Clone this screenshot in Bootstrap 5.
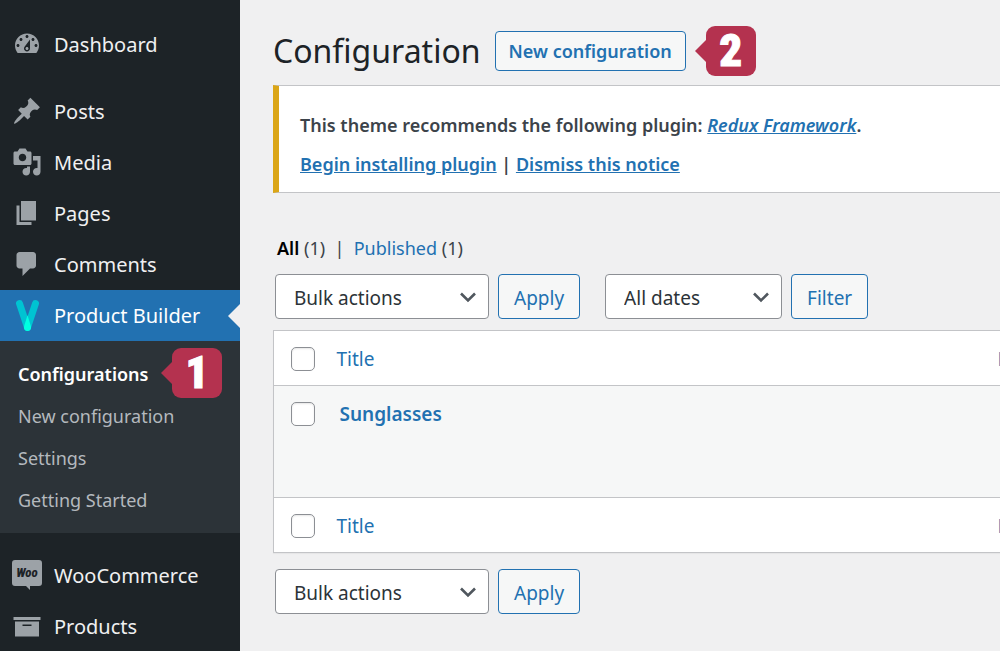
<!DOCTYPE html>
<html lang="en">
<head>
<meta charset="utf-8">
<meta name="viewport" content="width=device-width, initial-scale=1">
<title>Configuration</title>
<link rel="stylesheet" href="https://cdn.jsdelivr.net/npm/bootstrap@5.3.0/dist/css/bootstrap.min.css">
<style>
  :root { --wp-blue: #2271b1; --wp-line: #c3c4c7; --wp-dark: #1d2327; }
  body { font-family: "Noto Sans", "Open Sans", sans-serif; font-size: 19px; line-height: 26px; background: #f0f0f1; color: #3c434a; }
  a { color: var(--wp-blue); }

  .admin-menu { width: 240px; background: var(--wp-dark); padding-top: 19px; font-size: 20px; }
  .admin-menu .menu-item { height: 51px; padding-left: 12px; gap: 12px; color: #f0f0f1; }
  .admin-menu .menu-item svg { width: 30px; height: 30px; fill: #9ca2a7; margin-bottom: 2px; }
  .menu-gap { margin-top: 17px; }
  .menu-item.current { background: var(--wp-blue); color: #fff; }
  .menu-item.current::after { content: ""; position: absolute; right: 0; top: 14px; border: 12px solid transparent; border-left: 0; border-right-color: #f0f0f1; }
  .submenu { background: #2c3338; padding: 12px 0 12px 18px; font-size: 18px; }
  .submenu a { height: 42px; color: #b4b9be; }
  .submenu .active { color: #fff; font-weight: 600; }

  .step { width: 50px; height: 50px; border-radius: 9px; background: #b4324f; color: #fff; font: 900 45px/50px "Roboto Condensed", Roboto, "Liberation Sans", sans-serif; -webkit-text-stroke: 1px #fff; }
  .step::before { content: ""; position: absolute; left: -11px; top: 13px; border: 12px solid transparent; border-left: 0; border-right-color: #b4324f; }
  .step-menu { position: absolute; left: 172px; top: 7px; }

  .content { padding: 26px 0 0 33px; }
  .page-title { font-size: 32px; line-height: 40px; font-weight: 400; color: var(--wp-dark); }
  .btn-wp { --bs-btn-color: var(--wp-blue); --bs-btn-border-color: var(--wp-blue); --bs-btn-bg: #f6f7f7; --bs-btn-border-radius: 4px; --bs-btn-padding-y: 0; --bs-btn-padding-x: 15px; --bs-btn-font-size: 19px; --bs-btn-hover-color: #0a4b78; --bs-btn-hover-bg: #f0f0f1; --bs-btn-hover-border-color: #0a4b78; height: 45px; }
  .tools .btn-wp { padding-top: 3px; }
  .btn-title { --bs-btn-padding-x: 13px; --bs-btn-font-size: 18px; --bs-btn-font-weight: 600; height: 40px; margin-left: 14px; }
  .step-head { margin-left: 20px; }

  .notice { margin-top: 9px; border: 1px solid var(--wp-line); border-left: 6px solid #dba617; border-right: 0; background: #fff; padding: 26px 21px 14px; font-size: 18px; font-weight: 600; height: 108px; }
  .notice p { margin-bottom: 13px; }
  .views { margin-top: 42px; padding-left: 4px; font-size: 18px; }
  .views b { color: #000; font-weight: 600; }
  .tools { padding-left: 2px; gap: 9px; }
  .tools-top { margin-top: 13px; }
  .tools .form-select { height: 45px; padding: 3px 40px 0 18px; border: 1px solid #8c8f94; border-radius: 4px; font-size: 19px; color: #2c3338; background-color: #fff; background-position: right 10px center; background-size: 20px 20px;
    background-image: url("data:image/svg+xml,%3csvg xmlns='http://www.w3.org/2000/svg' viewBox='0 0 20 20'%3e%3cpath d='M3 6.5l7 7 7-7' fill='none' stroke='%2350575e' stroke-width='2.6'/%3e%3c/svg%3e"); }
  .bulk { width: 214px; }
  .dates { width: 177px; margin-left: 16px; }

  /* the list keeps a Date column that runs past the window edge */
  .posts { --bs-table-bg: #fff; width: calc(100% + 120px); table-layout: fixed; border: 1px solid var(--wp-line); margin: 11px 0 16px; box-shadow: 0 1px 1px rgba(0,0,0,.04); }
  .posts > * > tr > * { border-bottom: 1px solid var(--wp-line); height: 55px; padding: 15px 0 13px; font-weight: 400; vertical-align: top; box-shadow: none; }
  .posts tbody { border-top: 0; }
  .posts > tbody > tr > * { height: 112px; background: #f6f7f7; }
  .posts .check-col { width: 63px; padding-left: 17px; }
  .posts .date-col { width: 122px; }
  .posts .form-check-input { display: block; width: 24px; height: 24px; margin: 1px 0 0; border: 1px solid #8c8f94; border-radius: 5px; box-shadow: inset 0 1px 2px rgba(0,0,0,.1); }
  .posts .row-title { font-weight: 600; padding-left: 3px; }
</style>
</head>
<body>
<div class="d-flex vh-100 overflow-hidden">
  <nav class="admin-menu flex-shrink-0" aria-label="Main menu">
    <a href="#" class="menu-item d-flex align-items-center text-decoration-none">
      <svg viewBox="0 0 20 20" aria-hidden="true"><path d="M3.76 16h12.48c1.1-1.37 1.76-3.11 1.76-5 0-4.42-3.58-8-8-8s-8 3.58-8 8c0 1.89.66 3.63 1.76 5zM10 4c.55 0 1 .45 1 1s-.45 1-1 1-1-.45-1-1 .45-1 1-1zM6 6c.55 0 1 .45 1 1s-.45 1-1 1-1-.45-1-1 .45-1 1-1zm8 0c.55 0 1 .45 1 1s-.45 1-1 1-1-.45-1-1 .45-1 1-1zm-5.37 5.55L12 7v6c0 1.1-.9 2-2 2s-2-.9-2-2c0-.57.24-1.08.63-1.45zM4 10c.55 0 1 .45 1 1s-.45 1-1 1-1-.45-1-1 .45-1 1-1zm12 0c.55 0 1 .45 1 1s-.45 1-1 1-1-.45-1-1 .45-1 1-1zm-5 3c0-.55-.45-1-1-1s-1 .45-1 1 .45 1 1 1 1-.45 1-1z"/></svg>
      Dashboard</a>
    <a href="#" class="menu-item mt-3 d-flex align-items-center text-decoration-none">
      <svg viewBox="0 0 20 20" aria-hidden="true"><path d="M10.44 3.02l1.82-1.82 6.36 6.35-1.83 1.82c-1.05-.68-2.48-.57-3.41.36l-.75.75c-.92.93-1.04 2.35-.35 3.41l-1.83 1.82-2.41-2.41-2.8 2.79c-.42.42-3.38 2.71-3.8 2.29s1.86-3.39 2.28-3.81l2.79-2.79L4.1 9.36l1.83-1.82c1.05.69 2.48.57 3.4-.36l.75-.75c.93-.92 1.05-2.35.36-3.41z"/></svg>
      Posts</a>
    <a href="#" class="menu-item d-flex align-items-center text-decoration-none">
      <svg viewBox="0 0 20 20" aria-hidden="true"><path d="M13 11V4c0-.55-.45-1-1-1h-1.67L9 1H5L3.67 3H2c-.55 0-1 .45-1 1v7c0 .55.45 1 1 1h10c.55 0 1-.45 1-1zM7 4.5c1.38 0 2.5 1.12 2.5 2.5S8.38 9.5 7 9.5 4.5 8.38 4.5 7 5.62 4.5 7 4.5zM14 6h5v10.5c0 1.38-1.12 2.5-2.5 2.5S14 17.88 14 16.5s1.12-2.5 2.5-2.5c.17 0 .34.02.5.05V9h-3V6zm-4 8.05V13h2v3.5c0 1.38-1.12 2.5-2.5 2.5S7 17.88 7 16.5 8.12 14 9.5 14c.17 0 .34.02.5.05z"/></svg>
      Media</a>
    <a href="#" class="menu-item d-flex align-items-center text-decoration-none">
      <svg viewBox="0 0 20 20" aria-hidden="true"><path d="M6 15V2h10v13H6zm-1 1h8v2H3V5h2v11z"/></svg>
      Pages</a>
    <a href="#" class="menu-item d-flex align-items-center text-decoration-none">
      <svg viewBox="0 0 20 20" aria-hidden="true"><path d="M5 2h9c1.1 0 2 .9 2 2v7c0 1.1-.9 2-2 2h-2l-5 5v-5H5c-1.1 0-2-.9-2-2V4c0-1.1.9-2 2-2z"/></svg>
      Comments</a>
    <a href="#" class="menu-item current position-relative d-flex align-items-center text-decoration-none">
      <svg viewBox="0 0 30 30" aria-hidden="true" overflow="visible"><g fill="none" stroke-width="7" stroke-linecap="round"><path d="M7.5 3.5l8 24M23.5 3.5l-8 24" stroke="#00c3d2"/></g><path d="M15.5 15.3l3.4 10.9a3.6 3.6 0 1 1-6.8 0z" fill="#00ffe1"/></svg>
      Product Builder</a>
    <div class="submenu position-relative">
      <a href="#" class="active d-flex align-items-center text-decoration-none">Configurations</a>
      <a href="#" class="d-flex align-items-center text-decoration-none">New configuration</a>
      <a href="#" class="d-flex align-items-center text-decoration-none">Settings</a>
      <a href="#" class="d-flex align-items-center text-decoration-none">Getting Started</a>
      <span class="step step-menu text-center">1</span>
    </div>
    <a href="#" class="menu-item menu-gap d-flex align-items-center text-decoration-none">
      <svg viewBox="0 0 30 30" aria-hidden="true"><path d="M3 0h24a3 3 0 0 1 3 3v20a3 3 0 0 1-3 3h-9v4l-4-4H3a3 3 0 0 1-3-3V3a3 3 0 0 1 3-3z"/><text x="15" y="17" text-anchor="middle" font-family="Roboto Condensed, Liberation Sans, sans-serif" font-size="13" font-weight="800" font-style="italic" fill="#1d2327">Woo</text></svg>
      WooCommerce</a>
    <a href="#" class="menu-item d-flex align-items-center text-decoration-none">
      <svg viewBox="0 0 20 20" aria-hidden="true"><path d="M19 4v2H1V4h18zM2 7h16v10H2V7zm11 3V9H7v1h6z"/></svg>
      Products</a>
  </nav>

  <main class="content flex-grow-1 overflow-hidden">
    <header class="d-flex align-items-center">
      <h1 class="page-title mb-0">Configuration</h1>
      <button type="button" class="btn btn-wp btn-title">New configuration</button>
      <span class="step step-head position-relative text-center">2</span>
    </header>

    <div class="notice">
      <p>This theme recommends the following plugin: <a href="#"><em>Redux Framework</em></a>.</p>
      <p><a href="#">Begin installing plugin</a> | <a href="#">Dismiss this notice</a></p>
    </div>

    <div class="views"><b>All</b> (1) &nbsp;|&nbsp; <a href="#" class="text-decoration-none">Published</a> (1)</div>

    <div class="tools tools-top d-flex">
      <select class="form-select bulk" aria-label="Bulk actions"><option>Bulk actions</option></select>
      <button type="button" class="btn btn-wp">Apply</button>
      <select class="form-select dates" aria-label="Filter by date"><option>All dates</option></select>
      <button type="button" class="btn btn-wp">Filter</button>
    </div>

    <table class="table posts">
      <thead>
        <tr><th class="check-col"><input type="checkbox" class="form-check-input" aria-label="Select all"></th><th><a href="#" class="text-decoration-none">Title</a></th><th class="date-col"><a href="#" class="text-decoration-none">Date</a></th></tr>
      </thead>
      <tbody>
        <tr><td class="check-col"><input type="checkbox" class="form-check-input" aria-label="Select Sunglasses"></td><td><a href="#" class="row-title text-decoration-none">Sunglasses</a></td><td class="date-col"></td></tr>
      </tbody>
      <tfoot>
        <tr><th class="check-col"><input type="checkbox" class="form-check-input" aria-label="Select all"></th><th><a href="#" class="text-decoration-none">Title</a></th><th class="date-col"><a href="#" class="text-decoration-none">Date</a></th></tr>
      </tfoot>
    </table>

    <div class="tools d-flex">
      <select class="form-select bulk" aria-label="Bulk actions"><option>Bulk actions</option></select>
      <button type="button" class="btn btn-wp">Apply</button>
    </div>
  </main>
</div>
<script src="https://cdn.jsdelivr.net/npm/bootstrap@5.3.0/dist/js/bootstrap.bundle.min.js"></script>
</body>
</html>
